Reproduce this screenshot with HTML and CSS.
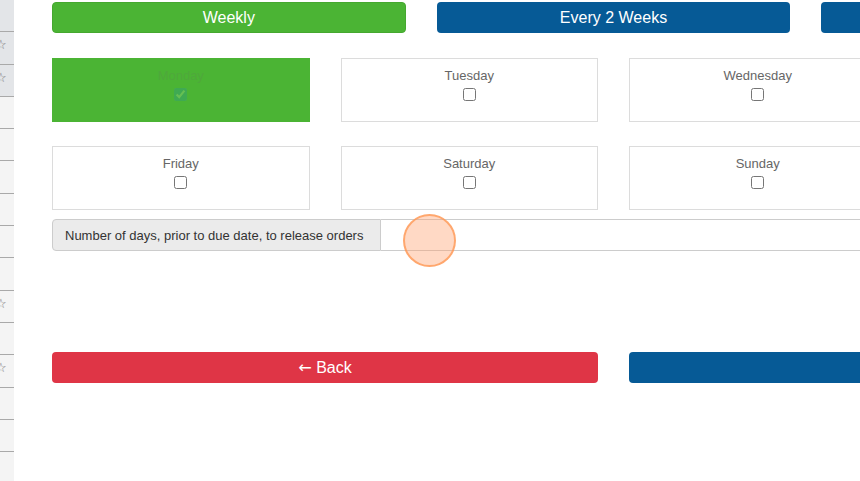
FILE: index.html
```html
<!DOCTYPE html>
<html lang="en">
<head>
    <meta charset="UTF-8">
    <meta name="viewport" content="width=device-width, initial-scale=1.0">
    <title>Recurring Orders</title>
    <link rel="stylesheet" href="styles.css">
</head>
<body>
    <aside class="sidebar">
        <div class="row active"></div>
        <div class="row active"><span class="star">&#9734;</span></div>
        <div class="row active"><span class="star">&#9734;</span></div>
        <div class="row"></div>
        <div class="row"></div>
        <div class="row"></div>
        <div class="row"></div>
        <div class="row"></div>
        <div class="row"></div>
        <div class="row"><span class="star">&#9734;</span></div>
        <div class="row"></div>
        <div class="row"><span class="star">&#9734;</span></div>
        <div class="row"></div>
        <div class="row"></div>
        <div class="row"></div>
    </aside>

    <main class="content">
        <div class="freq">
            <button class="btn btn-green">Weekly</button>
            <button class="btn btn-blue">Every 2 Weeks</button>
            <button class="btn btn-blue">Monthly</button>
        </div>

        <div class="days">
            <label class="day selected">
                <span class="day-inner">
                    <span class="day-name">Monday</span>
                    <input type="checkbox" checked>
                </span>
            </label>
            <label class="day">
                <span class="day-inner">
                    <span class="day-name">Tuesday</span>
                    <input type="checkbox">
                </span>
            </label>
            <label class="day">
                <span class="day-inner">
                    <span class="day-name">Wednesday</span>
                    <input type="checkbox">
                </span>
            </label>
            <label class="day">
                <span class="day-inner">
                    <span class="day-name">Thursday</span>
                    <input type="checkbox">
                </span>
            </label>
            <label class="day">
                <span class="day-inner">
                    <span class="day-name">Friday</span>
                    <input type="checkbox">
                </span>
            </label>
            <label class="day">
                <span class="day-inner">
                    <span class="day-name">Saturday</span>
                    <input type="checkbox">
                </span>
            </label>
            <label class="day">
                <span class="day-inner">
                    <span class="day-name">Sunday</span>
                    <input type="checkbox">
                </span>
            </label>
        </div>

        <div class="input-group">
            <span class="addon">Number of days, prior to due date, to release orders</span>
            <input type="text" class="days-input">
        </div>

        <div class="actions">
            <button class="btn btn-red"><span class="arrow">&larr;</span> Back</button>
            <button class="btn btn-blue">Next <span class="arrow">&rarr;</span></button>
        </div>
    </main>

    <div class="click-dot"></div>
</body>
</html>
```

FILE: styles.css
```css
html, body {
    margin: 0;
    padding: 0;
    height: 481px;
    overflow: hidden;
    background-color: #fff;
}
body {
    display: flex;
    align-items: flex-start;
    font-family: "Liberation Sans", Arial, sans-serif;
    position: relative;
}
.sidebar {
    flex: none;
    width: 14px;
    height: 481px;
    background-color: #f4f4f4;
}
.sidebar .row {
    box-sizing: border-box;
    height: 32.3px;
    border-bottom: 1px solid #a9a9a9;
    overflow: hidden;
    position: relative;
}
.sidebar .row.active {
    background-color: #e3e5e8;
}
.sidebar .star {
    position: absolute;
    left: -5px;
    top: 5px;
    font-size: 13px;
    color: #777;
    font-family: "DejaVu Sans", sans-serif;
}
.content {
    flex: none;
    width: 1123px;
    padding: 2px 0 0 38px;
}
.btn {
    display: block;
    width: 100%;
    height: 31px;
    border: 1px solid transparent;
    border-radius: 4px;
    color: #fff;
    font-family: "Liberation Sans", Arial, sans-serif;
    font-size: 16px;
    padding: 0;
    cursor: pointer;
}
.btn .arrow {
    font-family: "DejaVu Sans", sans-serif;
    font-size: 16px;
}
.btn-green {
    background-color: #4bb434;
    border-color: #45a82f;
}
.btn-blue {
    background-color: #065a96;
}
.btn-red {
    background-color: #df3546;
}
.freq {
    display: grid;
    grid-template-columns: repeat(3, 1fr);
    column-gap: 31px;
}
.days {
    display: grid;
    grid-template-columns: repeat(4, 1fr);
    column-gap: 31px;
    row-gap: 24px;
    margin-top: 25px;
}
.day {
    box-sizing: border-box;
    height: 64px;
    border: 1px solid #dcdcdc;
    text-align: center;
    padding-top: 8px;
    color: #666;
    font-size: 13px;
}
.day-inner {
    display: block;
}
.day-name {
    display: block;
    line-height: 18px;
}
.day input {
    margin: 3px 0 0 0;
    width: 13px;
    height: 13px;
}
.day.selected {
    background-color: #4bb434;
    border-color: #4bb434;
}
.day.selected .day-inner {
    opacity: 0.15;
}
.input-group {
    display: flex;
    height: 32px;
    margin-top: 9px;
}
.addon {
    box-sizing: border-box;
    display: flex;
    align-items: center;
    padding: 0 12px;
    width: 329px;
    background-color: #ebebeb;
    border: 1px solid #ccc;
    border-radius: 4px 0 0 4px;
    color: #333;
    font-size: 13px;
    white-space: nowrap;
}
.days-input {
    flex: 1;
    box-sizing: border-box;
    height: 32px;
    border: 1px solid #ccc;
    border-left: none;
    margin: 0;
}
.actions {
    display: grid;
    grid-template-columns: repeat(2, 1fr);
    column-gap: 31px;
    margin-top: 101px;
}
.click-dot {
    position: absolute;
    left: 403px;
    top: 214px;
    width: 53px;
    height: 53px;
    box-sizing: border-box;
    border-radius: 50%;
    background-color: rgba(255, 160, 110, 0.4);
    border: 2px solid rgba(255, 150, 80, 0.75);
}
```
